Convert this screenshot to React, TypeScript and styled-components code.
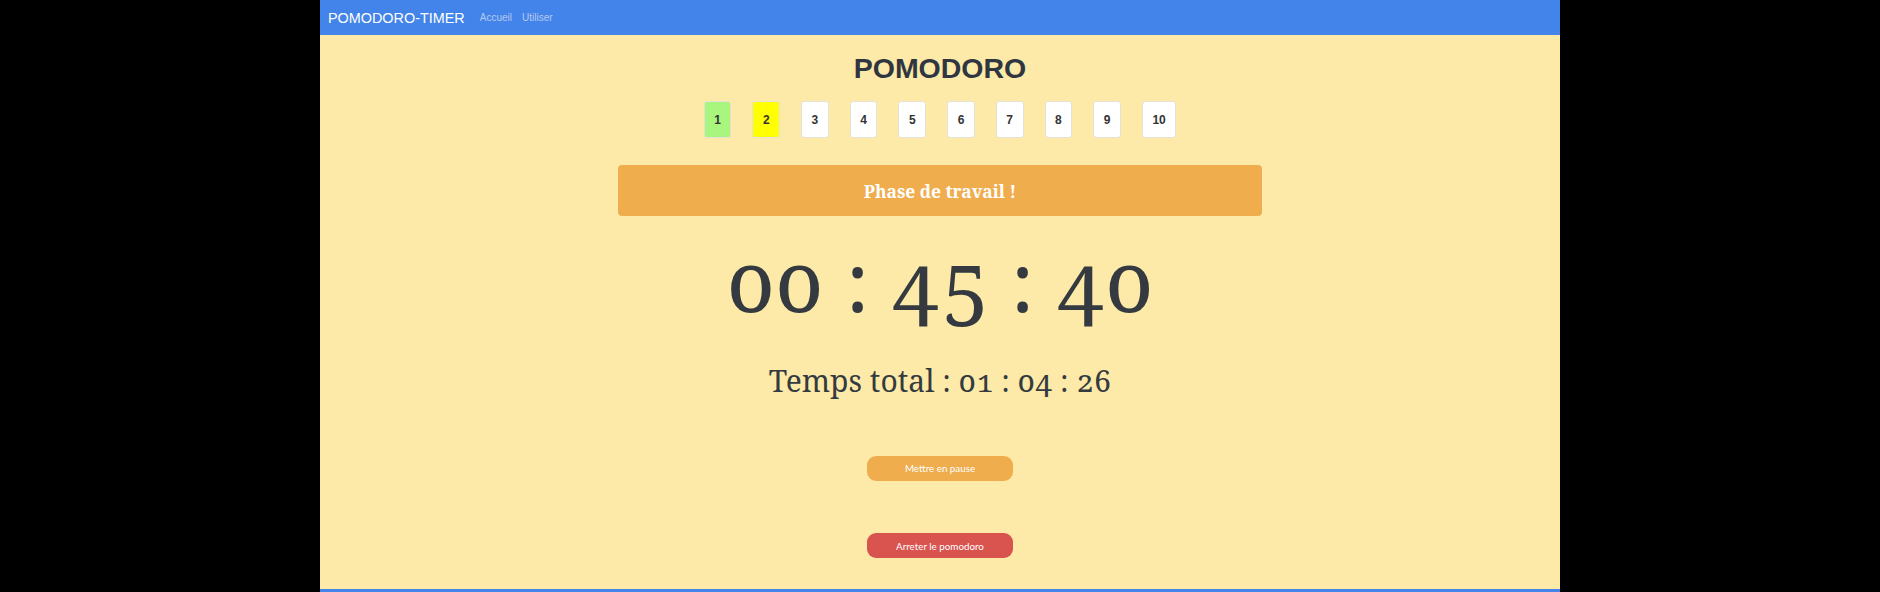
import React from "react";
import styled, { createGlobalStyle } from "styled-components";

const GlobalStyle = createGlobalStyle`
  html, body { margin: 0; padding: 0; background: #000; }
  body { font-family: "Liberation Sans", Arial, sans-serif; }
`;

const Page = styled.div`
  width: 1240px;
  height: 592px;
  margin: 0 auto;
  background: #fdeaa8;
  display: flex;
  flex-direction: column;
`;

const NavBar = styled.nav`
  height: 35px;
  background: #4384ea;
  display: flex;
  align-items: center;
  padding: 0 8px;
  flex-shrink: 0;
`;

const Brand = styled.span`
  font-family: "Liberation Sans", Arial, sans-serif;
  font-size: 14.4px;
  color: #fff;
  margin-right: 15px;
`;

const NavLink = styled.a`
  font-family: "Liberation Sans", Arial, sans-serif;
  font-size: 10px;
  color: #b6c9ef;
  text-decoration: none;
  margin-right: 10px;
`;

const Main = styled.main`
  flex: 1;
  display: flex;
  flex-direction: column;
  align-items: center;
`;

const Title = styled.h1`
  margin: 16.5px 0 0;
  font-family: "Liberation Sans", Arial, sans-serif;
  font-weight: bold;
  font-size: 28.5px;
  line-height: 32px;
  color: #2f3640;
`;

const Steps = styled.div`
  display: flex;
  gap: 21px;
  margin-top: 17.5px;
`;

const Step = styled.div<{ $bg: string }>`
  height: 37px;
  padding: 0 9.5px;
  box-sizing: border-box;
  border: 1px solid #e4e1d6;
  border-radius: 3px;
  background: ${(p) => p.$bg};
  display: flex;
  align-items: center;
  justify-content: center;
  font-family: "Liberation Sans", Arial, sans-serif;
  font-weight: bold;
  font-size: 12px;
  color: #333;
`;

const Banner = styled.div`
  width: 644px;
  height: 51px;
  margin-top: 27px;
  background: #f0ad4e;
  border-radius: 4px;
  display: flex;
  align-items: center;
  justify-content: center;
  font-family: "Noto Serif", Georgia, serif;
  font-weight: bold;
  font-size: 17.4px;
  color: #fff;
`;

const Clock = styled.div`
  margin-top: 14.4px;
  font-family: "Noto Serif", Georgia, serif;
  font-variant-numeric: oldstyle-nums;
  font-feature-settings: "onum" 1;
  font-size: 84px;
  line-height: 100px;
  color: #343a40;
`;

const Total = styled.div`
  margin-top: 31px;
  font-family: "Noto Serif", Georgia, serif;
  font-variant-numeric: oldstyle-nums;
  font-feature-settings: "onum" 1;
  font-size: 30px;
  line-height: 40px;
  color: #343a40;
`;

const ActionButton = styled.button<{ $bg: string; $top: number }>`
  margin-top: ${(p) => p.$top}px;
  width: 146px;
  height: 25px;
  border: none;
  border-radius: 9px;
  background: ${(p) => p.$bg};
  color: #fff;
  font-family: Lato, "Open Sans", sans-serif;
  font-size: 9.8px;
  cursor: pointer;
  padding: 0;
`;

const Footer = styled.div`
  height: 3px;
  background: #4384ea;
  flex-shrink: 0;
`;

const steps = Array.from({ length: 10 }, (_, i) => i + 1);

function stepColor(n: number) {
  if (n === 1) return "#a8f67e";
  if (n === 2) return "#ffff00";
  return "#ffffff";
}

export default function App() {
  return (
    <>
      <GlobalStyle />
      <Page>
        <NavBar>
          <Brand>POMODORO-TIMER</Brand>
          <NavLink href="#">Accueil</NavLink>
          <NavLink href="#">Utiliser</NavLink>
        </NavBar>
        <Main>
          <Title>POMODORO</Title>
          <Steps>
            {steps.map((n) => (
              <Step key={n} $bg={stepColor(n)}>
                {n}
              </Step>
            ))}
          </Steps>
          <Banner>Phase de travail !</Banner>
          <Clock>00 : 45 : 40</Clock>
          <Total>Temps total : 01 : 04 : 26</Total>
          <ActionButton $bg="#f0ad4e" $top={54.4}>
            Mettre en pause
          </ActionButton>
          <ActionButton $bg="#d9534f" $top={52.6}>
            Arreter le pomodoro
          </ActionButton>
        </Main>
        <Footer />
      </Page>
    </>
  );
}
